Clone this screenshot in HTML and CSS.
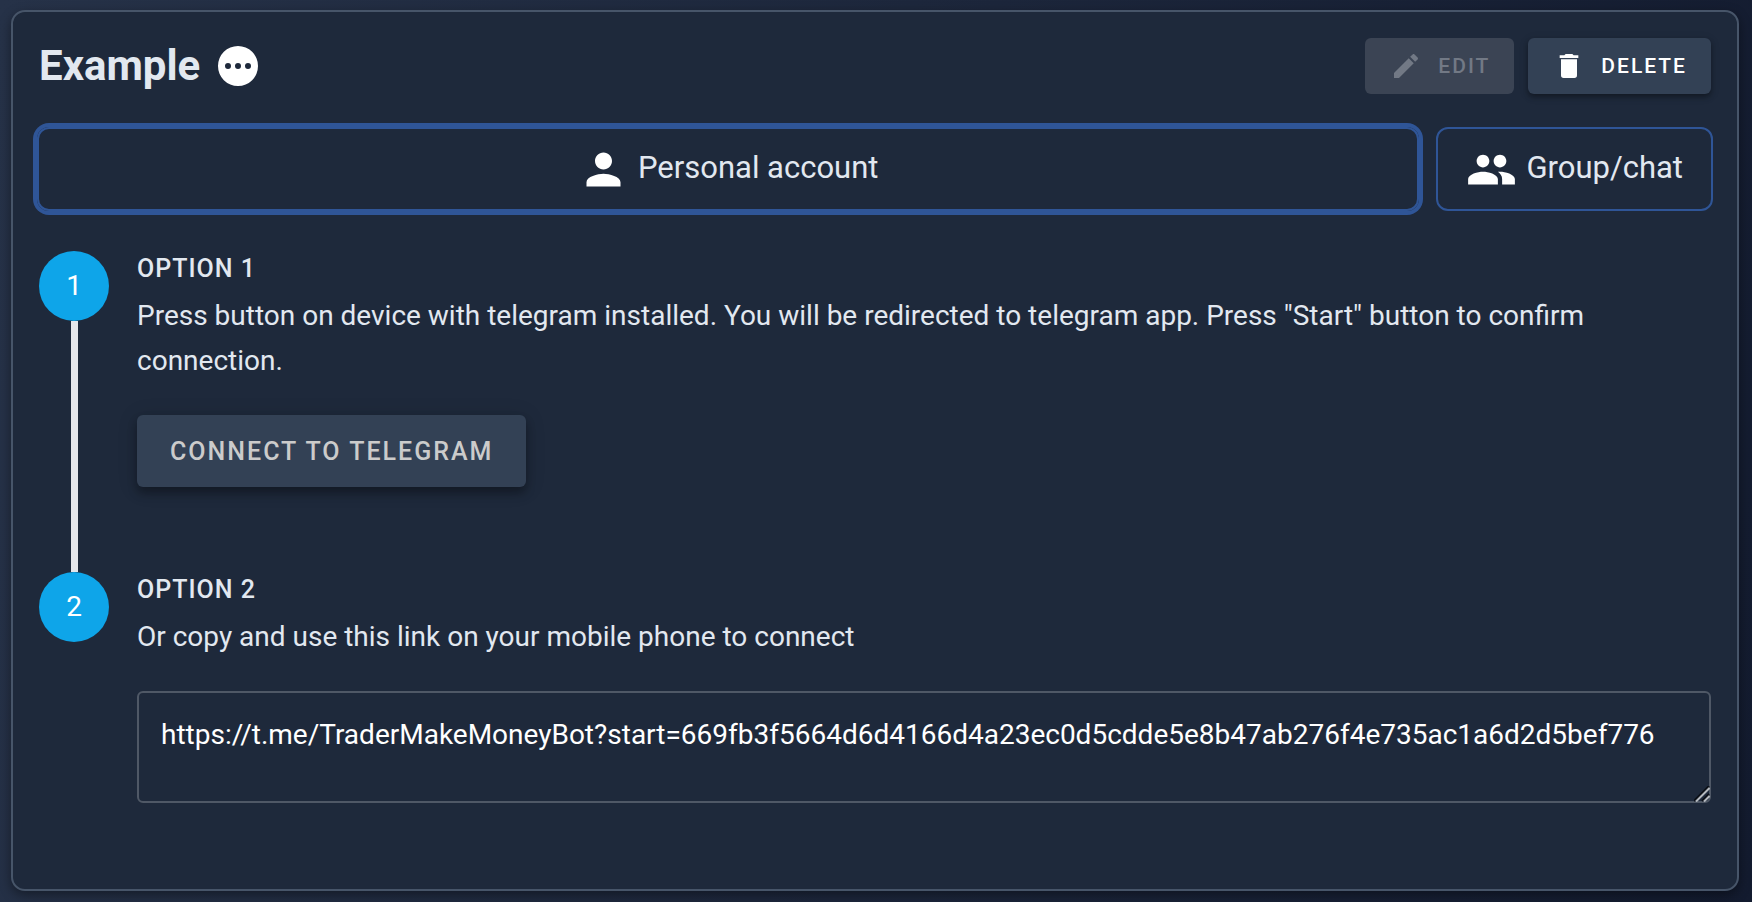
FILE: index.html
```html
<!DOCTYPE html>
<html lang="en">
<head>
<meta charset="utf-8">
<meta name="viewport" content="width=device-width, initial-scale=1">
<title>Example</title>
<link rel="stylesheet" href="styles.css">
</head>
<body>
<main class="card">
  <header class="card-header">
    <h1 class="title">Example</h1>
    <button class="icon-button" type="button" aria-label="More">
      <svg class="icon-more" viewBox="0 0 24 24" aria-hidden="true"><path d="M12 2a10 10 0 1 0 0 20 10 10 0 0 0 0-20zM7 13.5a1.5 1.5 0 1 1 0-3 1.5 1.5 0 0 1 0 3zm5 0a1.5 1.5 0 1 1 0-3 1.5 1.5 0 0 1 0 3zm5 0a1.5 1.5 0 1 1 0-3 1.5 1.5 0 0 1 0 3z"/></svg>
    </button>
    <div class="actions">
      <button class="button button-small" type="button" disabled>
        <svg class="icon-small" viewBox="0 0 24 24" aria-hidden="true"><path d="M20.71 7.04c.39-.39.39-1.04 0-1.41l-2.34-2.34c-.37-.39-1.02-.39-1.41 0l-1.84 1.83 3.75 3.75M3 17.25V21h3.75L17.81 9.93l-3.75-3.75L3 17.25z"/></svg>
        Edit
      </button>
      <button class="button button-small button-delete" type="button">
        <svg class="icon-small" viewBox="0 0 24 24" aria-hidden="true"><path d="M19 4h-3.5l-1-1h-5l-1 1H5v2h14M6 19a2 2 0 0 0 2 2h8a2 2 0 0 0 2-2V7H6v12z"/></svg>
        Delete
      </button>
    </div>
  </header>

  <div class="tabs">
    <button class="tab tab-wide tab-active" type="button" aria-pressed="true">
      <svg class="icon-tab" viewBox="0 0 24 24" aria-hidden="true"><path d="M12 12c2.21 0 4-1.79 4-4s-1.79-4-4-4-4 1.79-4 4 1.79 4 4 4zm0 2c-2.67 0-8 1.34-8 4v2h16v-2c0-2.66-5.33-4-8-4z"/></svg>
      <span class="tab-label">Personal account</span>
    </button>
    <button class="tab" type="button" aria-pressed="false">
      <svg class="icon-tab" viewBox="0 0 24 24" aria-hidden="true"><path d="M16 11c1.66 0 2.99-1.34 2.99-3S17.66 5 16 5s-3 1.34-3 3 1.34 3 3 3zm-8 0c1.66 0 2.99-1.34 2.99-3S9.66 5 8 5 5 6.34 5 8s1.34 3 3 3zm0 2c-2.33 0-7 1.17-7 3.5V19h14v-2.5c0-2.33-4.67-3.5-7-3.5zm8 0c-.29 0-.62.02-.97.05 1.16.84 1.97 1.97 1.97 3.45V19h6v-2.5c0-2.33-4.67-3.5-7-3.5z"/></svg>
      <span class="tab-label">Group/chat</span>
    </button>
  </div>

  <ol class="steps">
    <li class="step">
      <div class="marker"><span class="dot">1</span><span class="line"></span></div>
      <div class="step-body">
        <h2 class="step-title">Option 1</h2>
        <p class="step-text">Press button on device with telegram installed. You will be redirected to telegram app. Press "Start" button to confirm connection.</p>
        <button class="button button-connect" type="button">Connect to telegram</button>
      </div>
    </li>
    <li class="step">
      <div class="marker"><span class="dot">2</span></div>
      <div class="step-body">
        <h2 class="step-title">Option 2</h2>
        <label class="step-text" for="link">Or copy and use this link on your mobile phone to connect</label>
        <div class="field">
          <textarea class="link-input" id="link" rows="1" readonly spellcheck="false">https://t.me/TraderMakeMoneyBot?start=669fb3f5664d6d4166d4a23ec0d5cdde5e8b47ab276f4e735ac1a6d2d5bef776</textarea>
          <svg class="grip" viewBox="0 0 16 16" aria-hidden="true"><path class="grip-shade" d="M0 15 15 0M8 15l7-7"/><path class="grip-light" d="M2 15.500 15.500 2M10 15.500l5.500-5.500"/></svg>
        </div>
      </div>
    </li>
  </ol>
</main>
</body>
</html>
```
FILE: styles.css
```css
* {
  box-sizing: border-box;
}

body {
  min-height: 100vh;
  margin: 0;
  padding: 10px 13px 10px 11px;
  background: linear-gradient(100deg, #263248, #131b2f);
  color: #e2e8f0;
  font-family: Roboto, "Liberation Sans", sans-serif;
  font-size: 28px;
}

h1, h2, p, ol {
  margin: 0;
  padding: 0;
}

button, textarea {
  margin: 0;
  font-family: inherit;
  color: inherit;
}

svg {
  display: block;
  flex: none;
  fill: currentColor;
}

.card {
  padding: 26px 26px 86px;
  border: 2px solid #475569;
  border-radius: 14px;
  background: #1e293b;
  box-shadow: 0 4px 12px rgba(0, 0, 0, 0.4);
}

.card-header {
  display: flex;
  align-items: center;
}

.title {
  font-size: 42px;
  line-height: 56px;
  font-weight: 700;
}

.icon-button {
  margin-left: 14px;
  padding: 0;
  border: 0;
  background: none;
  color: #fff;
}

.icon-more {
  width: 48px;
  height: 48px;
}

.actions {
  display: flex;
  gap: 14px;
  margin-left: auto;
}

.button {
  display: flex;
  align-items: center;
  border: 0;
  border-radius: 6px;
  background: #334155;
  font-weight: 500;
  letter-spacing: 2px;
  text-transform: uppercase;
}

.button-small {
  gap: 16px;
  height: 56px;
  padding: 0 24px 0 25px;
  font-size: 21px;
}

.button:disabled {
  background: #3b4454;
  color: #727985;
}

.button-delete {
  color: #fff;
  box-shadow: 0 3px 5px rgba(0, 0, 0, 0.3), 0 2px 10px rgba(0, 0, 0, 0.15);
}

.icon-small {
  width: 32px;
  height: 32px;
}

.tabs {
  display: flex;
  gap: 17px;
  margin: 33px -2px 0;
}

.tab {
  display: flex;
  align-items: center;
  justify-content: center;
  gap: 9px;
  height: 84px;
  padding: 0 28px;
  border: 2px solid #2f5597;
  border-radius: 12px;
  background: none;
  font-size: 31px;
}

.tab-wide {
  flex: 1;
}

.tab-active {
  box-shadow: 0 0 0 4px #2f5597;
}

.tab-label {
  padding-bottom: 4px;
}

.icon-tab {
  width: 51px;
  height: 51px;
  color: #fff;
}

.steps {
  margin-top: 40px;
  list-style: none;
}

.step {
  display: grid;
  grid-template-columns: 70px 1fr;
  column-gap: 28px;
}

.marker {
  display: flex;
  flex-direction: column;
  align-items: center;
}

.dot {
  width: 70px;
  height: 70px;
  border-radius: 50%;
  background: #0ea5e9;
  color: #fff;
  line-height: 70px;
  text-align: center;
}

.line {
  flex: 1;
  width: 7px;
  background: #e5e7eb;
}

.step-title {
  font-size: 25px;
  line-height: 36px;
  font-weight: 500;
  letter-spacing: 1px;
  text-transform: uppercase;
}

.step-text {
  display: block;
  margin-top: 6px;
  line-height: 45px;
}

.button-connect {
  height: 72px;
  margin: 32px 0 85px;
  padding: 0 33px;
  color: #cbcbcb;
  font-size: 25px;
  box-shadow: 0 6px 10px rgba(0, 0, 0, 0.3), 0 2px 20px rgba(0, 0, 0, 0.15);
}

.field {
  position: relative;
  margin-top: 32px;
}

.link-input {
  display: block;
  width: 100%;
  height: 112px;
  padding: 18px 22px;
  border: 2px solid #4f5866;
  border-radius: 6px;
  background: none;
  color: #fff;
  font-size: 28px;
  line-height: 48px;
  resize: none;
  overflow: hidden;
}

.grip {
  position: absolute;
  right: 1px;
  bottom: 1px;
  width: 16px;
  height: 16px;
  fill: none;
  stroke-width: 2;
  pointer-events: none;
}

.grip-shade {
  stroke: #0b0f17;
}

.grip-light {
  stroke: #b4b8be;
}
```
